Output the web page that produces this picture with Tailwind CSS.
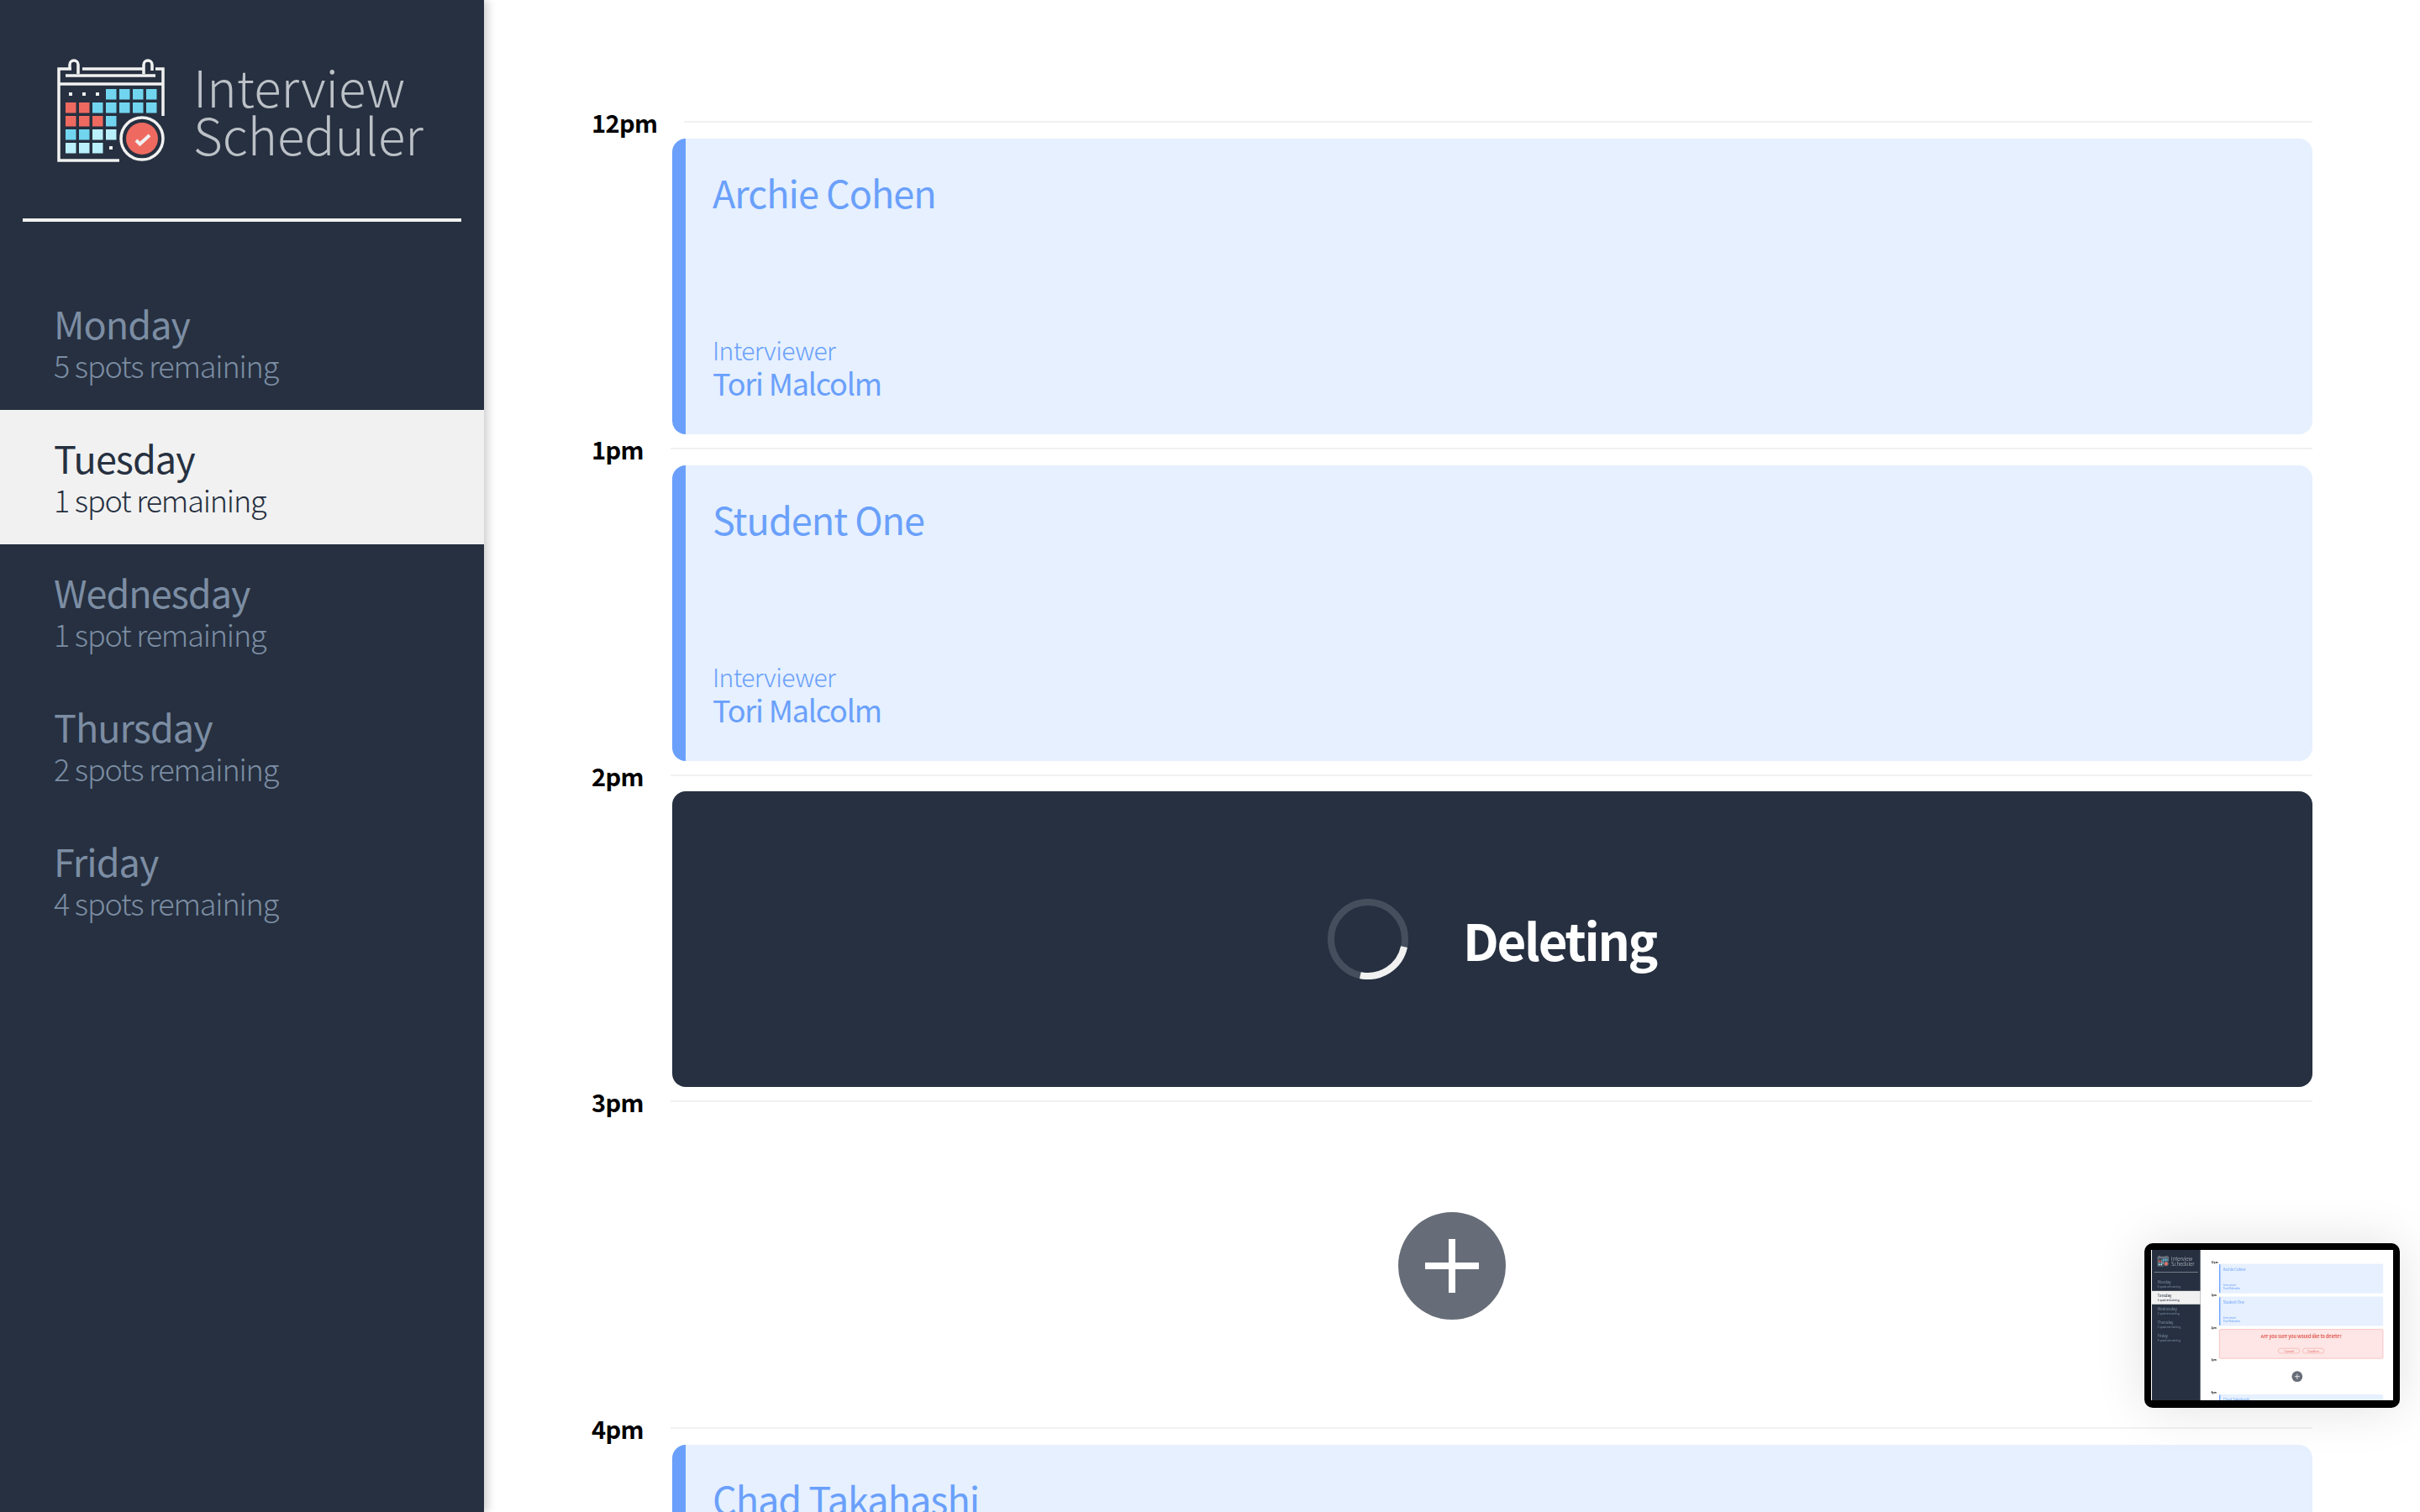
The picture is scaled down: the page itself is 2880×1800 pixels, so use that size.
<!DOCTYPE html>
<html lang="en">
<head>
    <meta charset="UTF-8">
    <title>Interview Scheduler</title>
    <script src="https://cdn.jsdelivr.net/npm/@tailwindcss/browser@4"></script>
</head>
<body class="bg-white overflow-hidden font-['Noto_Sans_CJK_SC','Source_Sans_Pro',sans-serif]">
    <div class="relative flex w-[2880px] h-[1800px] overflow-hidden">
        <!-- Sidebar -->
        <nav class="w-[576px] h-full shrink-0 bg-[#263040] shadow-[4px_0_10px_rgba(0,0,0,0.2)]">
            <div class="flex h-[260px] pl-[50px] pt-[60px]">
                <svg width="150" height="150" viewBox="0 0 150 150" class="shrink-0">
                    <g id="logo">
                        <g fill="none" stroke="#f1f1f1" stroke-width="3.5">
                            <path d="M35 22H20V131H92" />
                            <path d="M48 22H122" />
                            <path d="M135 22H144V78" />
                            <path d="M28 30H135" />
                            <path d="M20 40H144" />
                            <path d="M33 22V17a5 5 0 1 1 10 0V28" />
                            <path d="M121 28V17a5 5 0 1 1 10 0V24" />
                            <circle cx="119" cy="105" r="25" />
                        </g>
                        <g fill="#f1f1f1">
                            <rect x="32" y="50" width="4" height="4" />
                            <rect x="48" y="50" width="4" height="4" />
                            <rect x="64" y="50" width="4" height="4" />
                            <rect x="80" y="114" width="4" height="4" />
                        </g>
                        <g fill="#72d5ef">
                            <rect x="76" y="46" width="12.5" height="12.5" />
                            <rect x="92" y="46" width="12.5" height="12.5" />
                            <rect x="108" y="46" width="12.5" height="12.5" />
                            <rect x="124" y="46" width="12.5" height="12.5" />
                            <rect x="60" y="62" width="12.5" height="12.5" />
                            <rect x="76" y="62" width="12.5" height="12.5" />
                            <rect x="92" y="62" width="12.5" height="12.5" />
                            <rect x="108" y="62" width="12.5" height="12.5" />
                            <rect x="124" y="62" width="12.5" height="12.5" />
                            <rect x="76" y="78" width="12.5" height="12.5" />
                            <rect x="28" y="94" width="12.5" height="12.5" />
                            <rect x="44" y="94" width="12.5" height="12.5" />
                        </g>
                        <g fill="#ee6a60">
                            <rect x="28" y="62" width="12.5" height="12.5" />
                            <rect x="44" y="62" width="12.5" height="12.5" />
                            <rect x="28" y="78" width="12.5" height="12.5" />
                            <rect x="44" y="78" width="12.5" height="12.5" />
                            <rect x="60" y="78" width="12.5" height="12.5" />
                            <circle cx="119" cy="105" r="19" />
                        </g>
                        <g fill="#b9f0fb">
                            <rect x="60" y="94" width="12.5" height="12.5" />
                            <rect x="76" y="94" width="12.5" height="12.5" />
                            <rect x="28" y="110" width="12.5" height="12.5" />
                            <rect x="44" y="110" width="12.5" height="12.5" />
                            <rect x="60" y="110" width="12.5" height="12.5" />
                        </g>
                        <path d="M112 107l4.500 4.500L128 101" fill="none" stroke="#f1f1f1" stroke-width="4" />
                    </g>
                </svg>
                <div class="ml-[30px] pt-[13px] text-[60px] leading-[57px] font-extralight text-[#bcc1c7]">
                    <div>Interview</div>
                    <div>Scheduler</div>
                </div>
            </div>
            <div class="ml-[27px] w-[522px] h-[4px] bg-[#f1f1f1] mb-[64px]"></div>
            <ul>
                <li class="h-[160px] pl-[64px] pt-[27px] text-[#7c8da3]">
                    <h2 class="text-[45px] leading-[60px] tracking-[-1px]">Monday</h2>
                    <p class="text-[36px] leading-[38px] font-light tracking-[-1.2px]">5 spots remaining</p>
                </li>
                <li class="h-[160px] pl-[64px] pt-[27px] text-[#263040] bg-[#f1f1f1]">
                    <h2 class="text-[45px] leading-[60px] tracking-[-1px]">Tuesday</h2>
                    <p class="text-[36px] leading-[38px] font-light tracking-[-1.2px]">1 spot remaining</p>
                </li>
                <li class="h-[160px] pl-[64px] pt-[27px] text-[#7c8da3]">
                    <h2 class="text-[45px] leading-[60px] tracking-[-1px]">Wednesday</h2>
                    <p class="text-[36px] leading-[38px] font-light tracking-[-1.2px]">1 spot remaining</p>
                </li>
                <li class="h-[160px] pl-[64px] pt-[27px] text-[#7c8da3]">
                    <h2 class="text-[45px] leading-[60px] tracking-[-1px]">Thursday</h2>
                    <p class="text-[36px] leading-[38px] font-light tracking-[-1.2px]">2 spots remaining</p>
                </li>
                <li class="h-[160px] pl-[64px] pt-[27px] text-[#7c8da3]">
                    <h2 class="text-[45px] leading-[60px] tracking-[-1px]">Friday</h2>
                    <p class="text-[36px] leading-[38px] font-light tracking-[-1.2px]">4 spots remaining</p>
                </li>
            </ul>
        </nav>

        <!-- Schedule -->
        <main class="flex-1 min-w-0 pl-[128px] pr-[128px] pt-[129px]">
            <section class="h-[388.75px]">
                <header class="flex items-center h-[32px] gap-[32px]">
                    <span class="text-[29px] leading-[32px] font-bold text-black tracking-[-0.6px]">12pm</span>
                    <hr class="flex-1 border-0 h-[2px] bg-[#f1f1f1]">
                </header>
                <article class="ml-[96px] mt-[4px] h-[352px] rounded-[16px] border-l-[16px] border-[#6aa0fb] bg-[#e6f0fe] text-[#6aa0fb] pl-[32px]">
                    <h3 class="pt-[34px] text-[45px] leading-[60px] tracking-[-1px]">Archie Cohen</h3>
                    <p class="mt-[137px] text-[30px] leading-[40px] font-light tracking-[-0.6px]">Interviewer</p>
                    <p class="text-[36px] leading-[38px] tracking-[-1.2px]">Tori Malcolm</p>
                </article>
            </section>
            <section class="h-[388.75px]">
                <header class="flex items-center h-[32px] gap-[32px]">
                    <span class="text-[29px] leading-[32px] font-bold text-black tracking-[-0.6px]">1pm</span>
                    <hr class="flex-1 border-0 h-[2px] bg-[#f1f1f1]">
                </header>
                <article class="ml-[96px] mt-[4px] h-[352px] rounded-[16px] border-l-[16px] border-[#6aa0fb] bg-[#e6f0fe] text-[#6aa0fb] pl-[32px]">
                    <h3 class="pt-[34px] text-[45px] leading-[60px] tracking-[-1px]">Student One</h3>
                    <p class="mt-[137px] text-[30px] leading-[40px] font-light tracking-[-0.6px]">Interviewer</p>
                    <p class="text-[36px] leading-[38px] tracking-[-1.2px]">Tori Malcolm</p>
                </article>
            </section>
            <section class="h-[388.75px]">
                <header class="flex items-center h-[32px] gap-[32px]">
                    <span class="text-[29px] leading-[32px] font-bold text-black tracking-[-0.6px]">2pm</span>
                    <hr class="flex-1 border-0 h-[2px] bg-[#f1f1f1]">
                </header>
                <article class="ml-[96px] mt-[3px] h-[352px] rounded-[16px] bg-[#263040] flex items-center">
                    <svg width="96" height="96" viewBox="0 0 96 96" class="ml-[780px] shrink-0">
                        <circle cx="48" cy="48" r="44" fill="none" stroke="#454e5c" stroke-width="8" />
                        <path d="M91.040 57.150A44 44 0 0 1 38.850 91.040" fill="none" stroke="#f1f1f1" stroke-width="8" />
                    </svg>
                    <h4 class="ml-[65px] text-[60px] leading-[80px] font-bold text-white tracking-[-2.3px]">Deleting</h4>
                </article>
            </section>
            <section class="h-[388.75px]">
                <header class="flex items-center h-[32px] gap-[32px]">
                    <span class="text-[29px] leading-[32px] font-bold text-black tracking-[-0.6px]">3pm</span>
                    <hr class="flex-1 border-0 h-[2px] bg-[#f1f1f1]">
                </header>
                <div class="mt-[4px] h-[352px] flex items-center justify-center">
                    <button class="w-[128px] h-[128px] rounded-full bg-[#676d78] flex items-center justify-center">
                        <svg width="64" height="64" viewBox="0 0 64 64">
                            <path d="M32 0V64M0 32H64" stroke="#ffffff" stroke-width="8" />
                        </svg>
                    </button>
                </div>
            </section>
            <section class="h-[388.75px]">
                <header class="flex items-center h-[32px] gap-[32px]">
                    <span class="text-[29px] leading-[32px] font-bold text-black tracking-[-0.6px]">4pm</span>
                    <hr class="flex-1 border-0 h-[2px] bg-[#f1f1f1]">
                </header>
                <article class="ml-[96px] mt-[4px] h-[352px] rounded-[16px] border-l-[16px] border-[#6aa0fb] bg-[#e6f0fe] text-[#6aa0fb] pl-[32px]">
                    <h3 class="pt-[34px] text-[45px] leading-[60px] tracking-[-1px]">Chad Takahashi</h3>
                </article>
            </section>
        </main>

        <!-- Thumbnail preview in the corner -->
        <div class="absolute left-[2552px] top-[1480px] w-[304px] h-[196px] rounded-[10px] bg-black p-[8px] shadow-[0_0_60px_rgba(0,0,0,0.12)]">
            <div class="w-[288px] h-[179px] pl-px overflow-hidden bg-white blur-[0.6px]">
                <div class="flex w-[2880px] h-[1800px] origin-top-left scale-[0.1]">
                    <div class="w-[576px] h-full shrink-0 bg-[#263040]">
                        <div class="flex h-[260px] pl-[50px] pt-[60px]">
                            <svg width="150" height="150" viewBox="0 0 150 150" class="shrink-0"><use href="#logo" /></svg>
                            <div class="ml-[30px] pt-[13px] text-[60px] leading-[57px] font-light text-[#d0d4d9]">
                                <div>Interview</div>
                                <div>Scheduler</div>
                            </div>
                        </div>
                        <div class="ml-[27px] w-[522px] h-[4px] bg-[#f1f1f1] mb-[64px]"></div>
                        <div class="h-[160px] pl-[64px] pt-[27px] text-[#7c8da3]"><div class="text-[45px] leading-[60px] tracking-[-1px]">Monday</div><div class="text-[36px] leading-[38px] tracking-[-1.2px]">5 spots remaining</div></div>
                        <div class="h-[160px] pl-[64px] pt-[27px] text-[#263040] bg-[#f1f1f1]"><div class="text-[45px] leading-[60px] tracking-[-1px]">Tuesday</div><div class="text-[36px] leading-[38px] tracking-[-1.2px]">1 spot remaining</div></div>
                        <div class="h-[160px] pl-[64px] pt-[27px] text-[#7c8da3]"><div class="text-[45px] leading-[60px] tracking-[-1px]">Wednesday</div><div class="text-[36px] leading-[38px] tracking-[-1.2px]">1 spot remaining</div></div>
                        <div class="h-[160px] pl-[64px] pt-[27px] text-[#7c8da3]"><div class="text-[45px] leading-[60px] tracking-[-1px]">Thursday</div><div class="text-[36px] leading-[38px] tracking-[-1.2px]">2 spots remaining</div></div>
                        <div class="h-[160px] pl-[64px] pt-[27px] text-[#7c8da3]"><div class="text-[45px] leading-[60px] tracking-[-1px]">Friday</div><div class="text-[36px] leading-[38px] tracking-[-1.2px]">4 spots remaining</div></div>
                    </div>
                    <div class="flex-1 min-w-0 pl-[128px] pr-[128px] pt-[129px]">
                        <div class="h-[388.75px]">
                            <div class="flex items-center h-[32px] gap-[32px]"><span class="text-[29px] leading-[32px] font-bold text-black">12pm</span><div class="flex-1 h-[2px] bg-[#f1f1f1]"></div></div>
                            <div class="ml-[96px] mt-[4px] h-[352px] rounded-[16px] border-l-[16px] border-[#6aa0fb] bg-[#e6f0fe] text-[#6aa0fb] pl-[32px]">
                                <div class="pt-[34px] text-[45px] leading-[60px] tracking-[-1px]">Archie Cohen</div>
                                <div class="mt-[137px] text-[30px] leading-[40px] tracking-[-0.6px]">Interviewer</div>
                                <div class="text-[36px] leading-[38px] tracking-[-1.2px]">Tori Malcolm</div>
                            </div>
                        </div>
                        <div class="h-[388.75px]">
                            <div class="flex items-center h-[32px] gap-[32px]"><span class="text-[29px] leading-[32px] font-bold text-black">1pm</span><div class="flex-1 h-[2px] bg-[#f1f1f1]"></div></div>
                            <div class="ml-[96px] mt-[4px] h-[352px] rounded-[16px] border-l-[16px] border-[#6aa0fb] bg-[#e6f0fe] text-[#6aa0fb] pl-[32px]">
                                <div class="pt-[34px] text-[45px] leading-[60px] tracking-[-1px]">Student One</div>
                                <div class="mt-[137px] text-[30px] leading-[40px] tracking-[-0.6px]">Interviewer</div>
                                <div class="text-[36px] leading-[38px] tracking-[-1.2px]">Tori Malcolm</div>
                            </div>
                        </div>
                        <div class="h-[388.75px]">
                            <div class="flex items-center h-[32px] gap-[32px]"><span class="text-[29px] leading-[32px] font-bold text-black">2pm</span><div class="flex-1 h-[2px] bg-[#f1f1f1]"></div></div>
                            <div class="ml-[96px] mt-[4px] h-[352px] rounded-[16px] border-[6px] border-[#f5a8a4] bg-[#fde6e5] flex flex-col items-center text-[#e2625c]">
                                <div class="pt-[50px] text-[54px] leading-[60px] font-bold tracking-[-1px]">Are you sure you would like to delete?</div>
                                <div class="mt-[110px] flex gap-[30px]">
                                    <div class="w-[260px] h-[64px] rounded-full border-[6px] border-[#f5a8a4] text-center text-[36px] leading-[52px]">Cancel</div>
                                    <div class="w-[260px] h-[64px] rounded-full border-[6px] border-[#f5a8a4] text-center text-[36px] leading-[52px]">Confirm</div>
                                </div>
                            </div>
                        </div>
                        <div class="h-[388.75px]">
                            <div class="flex items-center h-[32px] gap-[32px]"><span class="text-[29px] leading-[32px] font-bold text-black">3pm</span><div class="flex-1 h-[2px] bg-[#f1f1f1]"></div></div>
                            <div class="mt-[4px] h-[352px] flex items-center justify-center">
                                <div class="w-[128px] h-[128px] rounded-full bg-[#676d78] flex items-center justify-center">
                                    <svg width="64" height="64" viewBox="0 0 64 64"><path d="M32 0V64M0 32H64" stroke="#ffffff" stroke-width="8" /></svg>
                                </div>
                            </div>
                        </div>
                        <div class="h-[388.75px]">
                            <div class="flex items-center h-[32px] gap-[32px]"><span class="text-[29px] leading-[32px] font-bold text-black">4pm</span><div class="flex-1 h-[2px] bg-[#f1f1f1]"></div></div>
                            <div class="ml-[96px] mt-[4px] h-[352px] rounded-[16px] border-l-[16px] border-[#6aa0fb] bg-[#e6f0fe] text-[#6aa0fb] pl-[32px]">
                                <div class="pt-[34px] text-[45px] leading-[60px] tracking-[-1px]">Chad Takahashi</div>
                            </div>
                        </div>
                    </div>
                </div>
            </div>
        </div>
    </div>
</body>
</html>
